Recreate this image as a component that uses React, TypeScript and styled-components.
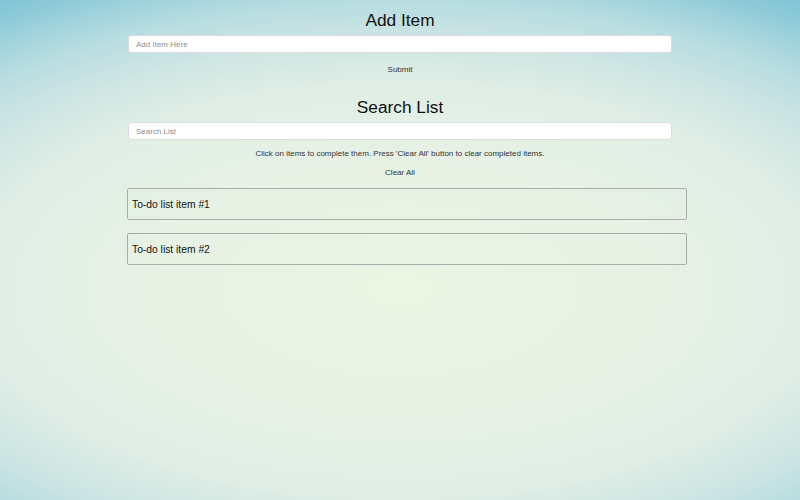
import React from "react";
import styled, { createGlobalStyle } from "styled-components";

const Global = createGlobalStyle`
  html, body { margin: 0; padding: 0; height: 100%; }
  body {
    font-family: "Liberation Sans", Arial, Helvetica, sans-serif;
    color: #222;
    background: radial-gradient(ellipse 880px 427px at 50% 290px, #eaf5e3 0%, #e6f1e5 35%, #e0eee6 48%, #cfe6e3 58%, #b8dde1 67%, #a6d5dd 72%, #8fcbd9 77%, #7ec4d6 82%, #70bdd2 100%);
  }
  #root { min-height: 100%; }
`;

const Page = styled.main`
  width: 544px;
  margin: 0 auto;
  display: flex;
  flex-direction: column;
  align-items: stretch;
  padding-top: 10px;
`;

const Title = styled.h2`
  margin: 0;
  font-size: 17.3px;
  line-height: 20px;
  font-weight: 400;
  text-align: center;
  color: #111;
`;

const Field = styled.input`
  box-sizing: border-box;
  height: 18px;
  margin-top: 5px;
  padding: 0 7px;
  border: 1px solid #dcdcdc;
  border-radius: 3px;
  background: #fff;
  font-family: inherit;
  font-size: 8px;
  color: #333;
  outline: none;
  &::placeholder { color: #8e8e8e; }
`;

const TextButton = styled.button<{ $top: number }>`
  align-self: center;
  margin-top: ${(p) => p.$top}px;
  height: 14px;
  padding: 0 4px;
  border: none;
  background: transparent;
  font-family: inherit;
  font-size: 8px;
  line-height: 14px;
  color: #333;
  cursor: pointer;
`;

const Spacer = styled.div<{ $h: number }>`
  height: ${(p) => p.$h}px;
`;

const Hint = styled.p`
  margin: 8px 0 0;
  font-size: 8px;
  line-height: 12px;
  text-align: center;
  color: #333;
`;

const List = styled.ul`
  list-style: none;
  margin: 8px 0 0 -1px;
  padding: 0;
  width: 560px;
  display: flex;
  flex-direction: column;
  gap: 13px;
`;

const Item = styled.li`
  box-sizing: border-box;
  height: 32px;
  display: flex;
  align-items: center;
  padding: 0 4px;
  border: 1px solid #a9aeab;
  border-radius: 2px;
  font-size: 10.3px;
  color: #111;
  cursor: pointer;
`;

export default function App() {
  return (
    <>
      <Global />
      <Page>
        <Title>Add Item</Title>
        <Field placeholder="Add Item Here" />
        <TextButton $top={10}>Submit</TextButton>
        <Spacer $h={20} />
        <Title>Search List</Title>
        <Field placeholder="Search List" />
        <Hint>Click on items to complete them. Press 'Clear All' button to clear completed items.</Hint>
        <TextButton $top={6}>Clear All</TextButton>
        <List>
          <Item>To-do list item #1</Item>
          <Item>To-do list item #2</Item>
        </List>
      </Page>
    </>
  );
}
